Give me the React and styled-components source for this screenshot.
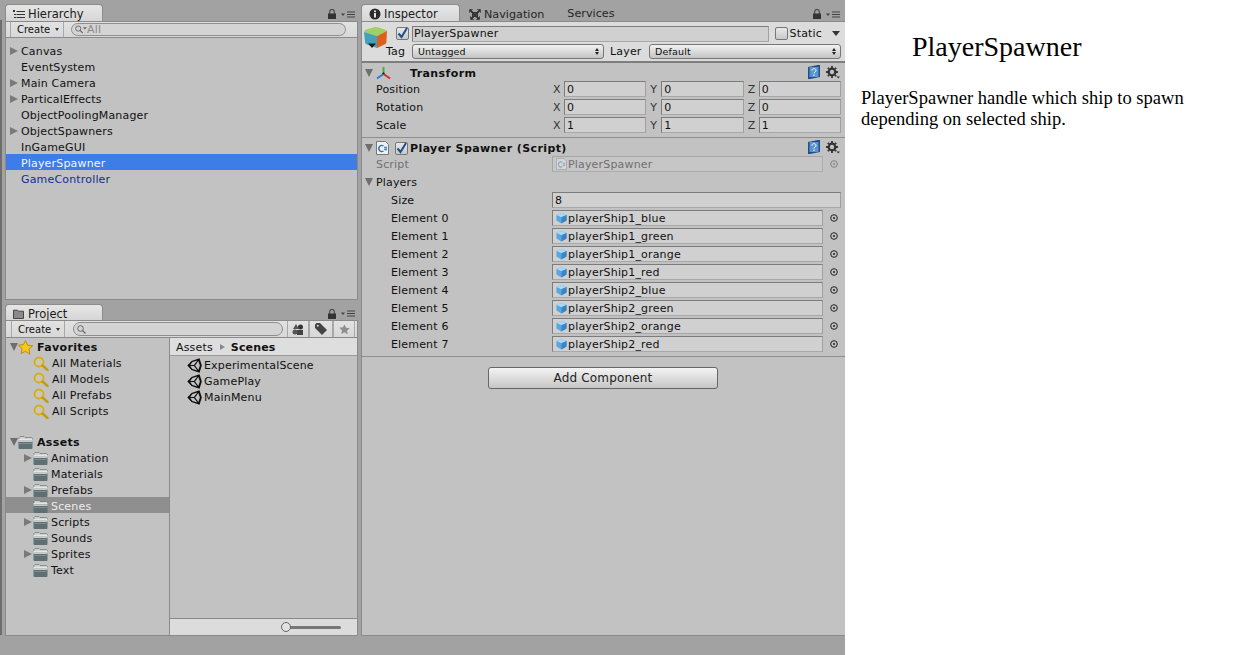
import React from "react";
import styled, { createGlobalStyle } from "styled-components";

const Global = createGlobalStyle`
  html, body { margin: 0; padding: 0; background: #fff; overflow: hidden; }
  #root { width: 1239px; height: 655px; }
  * { box-sizing: border-box; }
`;

const Page = styled.div`
  display: flex;
  width: 1239px;
  height: 655px;
`;
const Editor = styled.div`
  width: 845px;
  height: 655px;
  flex: none;
  display: flex;
  gap: 3px;
  background: #a2a2a2;
  font: 11px "DejaVu Sans", sans-serif;
  letter-spacing: 0.17px;
  color: #101010;
  white-space: nowrap;
`;
const Gutter = styled.div`
  width: 2px;
  flex: none;
  height: 615px;
  margin-top: 20px;
  background: #6e6e6e;
`;
const LeftColumn = styled.div`
  width: 353px;
  flex: none;
  height: 636px;
  display: flex;
  flex-direction: column;
`;
const Panel = styled.section`
  display: flex;
  flex-direction: column;
  height: ${p => p.$h || "auto"};
  flex: ${p => (p.$h ? "none" : "1")};
  min-width: 0;
`;
const TabStrip = styled.div`
  height: ${p => p.$h || 21}px;
  flex: none;
  padding-top: ${p => (p.$top === undefined ? 4 : p.$top)}px;
  display: flex;
  align-items: flex-end;
`;
const Tab = styled.div`
  width: ${p => p.$w}px;
  height: 100%;
  display: flex;
  align-items: center;
  gap: ${p => p.$gap || 3}px;
  padding: 2px 0 0 ${p => p.$pad || 4}px;
  font-size: 11.5px;
  letter-spacing: 0;
  color: #1a1a1a;
  background: linear-gradient(#e6e6e6, #d6d6d6);
  border: 1px solid #8c8c8c;
  border-bottom: none;
  border-radius: 4px 4px 0 0;
`;
const GhostTab = styled.div`
  height: 100%;
  display: flex;
  align-items: center;
  gap: 3px;
  margin-left: ${p => p.$ml}px;
  padding-top: ${p => p.$pt || 3}px;
  font-size: 11.2px;
  letter-spacing: 0;
  color: #262626;
`;
const TabTools = styled.div`
  margin-left: auto;
  height: 100%;
  display: flex;
  align-items: center;
  gap: 5px;
  padding: 3px ${p => p.$pr || 2}px 0 0;
`;
const Toolbar = styled.div`
  height: ${p => p.$h || 17}px;
  flex: none;
  display: flex;
  align-items: stretch;
  background: linear-gradient(#e2e2e2, #d8d8d8);
  border: 1px solid #8a8a8a;
`;
const ToolButton = styled.div`
  margin-left: ${p => p.$ml || 0}px;
  width: ${p => p.$w}px;
  display: flex;
  align-items: center;
  gap: 5px;
  padding-left: ${p => p.$pl || 6}px;
  font-size: 10px;
  letter-spacing: 0;
  border-left: 1px solid #a8a8a8;
  border-right: 1px solid #a8a8a8;
`;
const Caret = styled.span`
  width: 0;
  height: 0;
  border: 2.5px solid transparent;
  border-top: 3px solid #333;
  border-bottom: none;
`;
const SearchField = styled.div`
  margin: 1px 0 1px ${p => p.$ml}px;
  width: ${p => p.$w}px;
  border: 1px solid #8e8e8e;
  border-radius: 8px;
  background: #d4d4d4;
  display: flex;
  align-items: center;
  padding-left: 3px;
  font-size: 11px;
  color: #8a8a8a;
  line-height: 12px;
`;
const ListBody = styled.div`
  flex: 1;
  background: #c2c2c2;
  border: 1px solid #8a8a8a;
  border-top: none;
  padding-top: 4px;
  min-height: 0;
`;
const TreeRow = styled.div`
  height: 16px;
  display: flex;
  align-items: center;
  padding: 2px 0 0 ${p => p.$indent || 0}px;
  background: ${p => (p.$sel ? p.$sel : "transparent")};
  color: ${p => p.$color || "#111"};
  font-weight: ${p => (p.$bold ? 700 : 400)};
  letter-spacing: ${p => (p.$bold ? "0.35px" : "inherit")};
`;
const RowText = styled.span`
  margin-left: ${p => p.$ml}px;
`;
const Arrow = styled.span`
  width: 0;
  height: 0;
  flex: none;
  border-style: solid;
  border-color: transparent;
  border-left-color: #7a7a7a;
  border-width: 4.5px 0 4.5px 8px;
  margin-right: 1px;
`;
const ArrowDown = styled.span`
  width: 0;
  height: 0;
  flex: none;
  border-style: solid;
  border-color: transparent;
  border-top-color: #6e6e6e;
  border-width: 8px 4.5px 0 4.5px;
`;
const ArrowGap = styled.span`
  flex: none;
  width: 9px;
`;
const ProjectBody = styled.div`
  flex: 1;
  display: flex;
  min-height: 0;
  background: #c2c2c2;
  border: 1px solid #8a8a8a;
  border-top: none;
`;
const FolderPane = styled.div`
  width: 164px;
  flex: none;
  border-right: 1px solid #8a8a8a;
`;
const Spacer = styled.div`
  height: ${p => p.$h}px;
`;
const FilePane = styled.div`
  flex: 1;
  min-width: 0;
  display: flex;
  flex-direction: column;
`;
const Breadcrumb = styled.div`
  height: 18px;
  flex: none;
  display: flex;
  align-items: center;
  gap: 5px;
  padding: 1px 0 0 6px;
  background: #dedede;
  border-bottom: 1px solid #9a9a9a;
`;
const BreadArrow = styled.span`
  width: 0;
  height: 0;
  margin: 0 1px 0 2px;
  border-style: solid;
  border-color: transparent;
  border-left-color: #8a8a8a;
  border-width: 3px 0 3px 5px;
`;
const FileList = styled.div`
  flex: 1;
  padding-top: 1px;
`;
const FileRow = styled.div`
  height: 16px;
  display: flex;
  align-items: center;
  gap: 2px;
  padding-left: 17px;
`;
const SliderBar = styled.div`
  height: 17px;
  flex: none;
  display: flex;
  align-items: center;
  justify-content: flex-end;
  padding-right: 16px;
  background: #dcdcdc;
  border-top: 1px solid #8a8a8a;
`;
const SliderTrack = styled.div`
  width: 55px;
  height: 3px;
  border-radius: 2px;
  background: #777;
  position: relative;
`;
const SliderThumb = styled.span`
  position: absolute;
  left: -5px;
  top: -4px;
  width: 10px;
  height: 10px;
  border-radius: 50%;
  background: #e2e2e2;
  border: 1px solid #666;
`;
const Inspector = styled.div`
  flex: 1;
  min-width: 0;
  height: 636px;
  display: flex;
  flex-direction: column;
`;
const InspectorBody = styled.div`
  flex: 1;
  background: #c2c2c2;
  border-left: 1px solid #8a8a8a;
  border-bottom: 1px solid #8a8a8a;
  display: flex;
  flex-direction: column;
`;
const Header = styled.div`
  height: 42px;
  flex: none;
  display: flex;
  background: #dcdcdc;
  border-top: 1px solid #8a8a8a;
  border-bottom: 2px solid #7e7e7e;
  padding-right: 4px;
`;
const CubeSlot = styled.div`
  width: 34px;
  flex: none;
  padding: 4px 0 0 1px;
`;
const HeaderGrid = styled.div`
  flex: 1;
  min-width: 0;
  display: flex;
  flex-direction: column;
  gap: 2px;
  padding-top: 3px;
`;
const HeaderRow = styled.div`
  display: flex;
  align-items: center;
  height: ${p => p.$h}px;
`;
const Check = styled.span`
  width: 13px;
  height: 13px;
  flex: none;
  display: inline-flex;
  align-items: center;
  justify-content: center;
  background: linear-gradient(#e8e8e8, #c9c9c9);
  border: 1px solid #777;
  border-radius: 2px;
  margin: 0 ${p => p.$mr || 0}px 0 ${p => p.$ml || 0}px;
`;
const Field = styled.div`
  height: ${p => p.$h || 16}px;
  flex: 1;
  min-width: 0;
  display: flex;
  align-items: center;
  gap: 1px;
  padding-left: ${p => p.$pl || 2}px;
  background: ${p => (p.$off ? "#c6c6c6" : "#d0d0d0")};
  border: 1px solid ${p => (p.$off ? "#a4a4a4" : "#7c7c7c")};
  border-bottom-color: ${p => (p.$off ? "#acacac" : "#a8a8a8")};
  border-right-color: ${p => (p.$off ? "#acacac" : "#a0a0a0")};
  color: ${p => (p.$off ? "#707070" : "#111")};
`;
const StaticLabel = styled.span`
  margin: 0 10px 0 2px;
`;
const StaticArrow = styled.span`
  margin: 0 1px 0 auto;
  width: 0;
  height: 0;
  border-style: solid;
  border-color: transparent;
  border-top-color: #333;
  border-width: 5px 4.5px 0 4.5px;
`;
const TagLabel = styled.span`
  width: ${p => p.$w}px;
  flex: none;
  margin-left: ${p => p.$ml || 0}px;
`;
const Select = styled.div`
  width: ${p => p.$w}px;
  height: 15px;
  flex: none;
  display: flex;
  align-items: center;
  justify-content: space-between;
  padding: 0 4px 0 5px;
  font-size: 9.5px;
  background: linear-gradient(#f2f2f2, #c4c4c4);
  border: 1px solid #777;
  border-radius: 3px;
`;
const Updown = styled.span`
  display: flex;
  flex-direction: column;
  gap: 1px;
`;
const Tri = styled.span`
  width: 0;
  height: 0;
  border-style: solid;
  border-color: transparent;
  border-width: ${p => (p.$up ? "0 2px 3px 2px" : "3px 2px 0 2px")};
  border-bottom-color: ${p => (p.$up ? "#222" : "transparent")};
  border-top-color: ${p => (p.$up ? "transparent" : "#222")};
`;
const Component = styled.div`
  display: flex;
  flex-direction: column;
  padding-bottom: 3px;
  border-bottom: 1px solid #8e8e8e;
`;
const CompHead = styled.div`
  height: 17px;
  display: flex;
  align-items: center;
  padding: 3px 5px 0 3px;
  font-weight: 700;
  letter-spacing: 0.4px;
`;
const CompIcon = styled.span`
  width: ${p => p.$w}px;
  flex: none;
  display: flex;
  margin-left: 3px;
`;
const CompTools = styled.span`
  margin-left: auto;
  display: flex;
  align-items: center;
  gap: 5px;
  margin-top: -2px;
`;
const PropRow = styled.div`
  height: 18px;
  display: flex;
  align-items: center;
  padding: 0 4px 0 ${p => p.$pl || 14}px;
  color: ${p => p.$color || "inherit"};
`;
const PropLabel = styled.span`
  width: ${p => p.$w}px;
  flex: none;
`;
const Axes = styled.div`
  flex: 1;
  min-width: 0;
  display: grid;
  grid-template-columns: repeat(3, 1fr);
  column-gap: 4px;
`;
const Axis = styled.div`
  display: flex;
  align-items: center;
`;
const AxisLetter = styled.span`
  width: 11px;
  flex: none;
  color: #333;
`;
const Picker = styled.span`
  width: 18px;
  flex: none;
  display: flex;
  justify-content: flex-end;
  padding-right: 3px;
`;
const AddRow = styled.div`
  display: flex;
  justify-content: center;
  padding: 10px 1px 0 0;
`;
const AddButton = styled.div`
  width: 230px;
  height: 22px;
  display: flex;
  align-items: center;
  justify-content: center;
  font-size: 12px;
  color: #222;
  background: linear-gradient(#f4f4f4, #c6c6c6);
  border: 1px solid #666;
  border-radius: 3px;
`;
const Doc = styled.article`
  flex: 1;
  min-width: 0;
  background: #fff;
  color: #000;
  font-family: "Liberation Serif", serif;
  padding-left: 16px;
`;
const DocTitle = styled.h1`
  margin: 31px 0 0 51px;
  font-size: 28px;
  line-height: 32px;
  font-weight: 400;
`;
const DocText = styled.p`
  margin: 24px 0 0;
  width: 340px;
  font-size: 18.55px;
  line-height: 21px;
`;

const Svg = styled.svg`
  flex: none;
  display: block;
`;

const Lock = () => (
  <Svg width="8" height="10" viewBox="0 0 8 10">
    <path d="M1.700 5V2.800a2.300 2.300 0 0 1 4.600 0V5" fill="none" stroke="#444" strokeWidth="1.100" />
    <rect x="0" y="4.500" width="8" height="5.500" fill="#333" />
  </Svg>
);
const PaneMenu = () => (
  <Svg width="14" height="7" viewBox="0 0 14 7">
    <path d="M0 2.500h4L2 5z" fill="#444" />
    <path d="M6 1h8M6 3.500h8M6 6h8" stroke="#444" strokeWidth="1" />
  </Svg>
);
const ListIcon = () => (
  <Svg width="12" height="9" viewBox="0 0 12 9">
    <path d="M3.500 1.500H12M3.500 4.500H12M3.500 7.500H12" stroke="#333" />
    <path d="M0 0h2v2H0zM1 4h2v1H1zM1 7h2v1H1z" fill="#333" />
  </Svg>
);
const TabFolder = () => (
  <Svg width="11" height="10" viewBox="0 0 11 10">
    <path d="M.5 2V1.200h4l1 1h5V9.500H.5z" fill="#8a8a8a" stroke="#444" />
  </Svg>
);
const InfoIcon = () => (
  <Svg width="12" height="12" viewBox="0 0 12 12">
    <circle cx="6" cy="6" r="5.500" fill="#2b2b2b" />
    <rect x="5" y="5" width="2" height="4.500" fill="#e6e6e6" />
    <rect x="5" y="2.500" width="2" height="1.600" fill="#e6e6e6" />
  </Svg>
);
const NavIcon = () => (
  <Svg width="12" height="11" viewBox="0 0 12 11">
    <path d="M.5.5h3l-1 1 7 7 1-1v3h-3l1-1-7-7-1 1zM11.500.5v3l-1-1-7 7 1 1h-3v-3l1 1 7-7-1-1z" fill="#333" stroke="#333" strokeWidth=".6" />
    <rect x="3.500" y="3.500" width="5" height="4" fill="none" stroke="#333" />
  </Svg>
);
const SearchGlyph = ({ caret }) => (
  <Svg width={caret ? 12 : 9} height="9" viewBox={caret ? "0 0 13 9" : "0 0 9 9"}>
    <circle cx="3.500" cy="3.500" r="2.800" fill="none" stroke="#666" />
    <path d="M5.500 5.500l3 3" stroke="#666" strokeWidth="1.200" />
    {caret && <path d="M8.500 2H13l-2.250 2.500z" fill="#666" />}
  </Svg>
);
const ShapesIcon = () => (
  <Svg width="12" height="11" viewBox="0 0 12 11">
    <path d="M4 0l3 5H1z" fill="#555" />
    <circle cx="8.500" cy="3" r="2.500" fill="#333" />
    <rect x="5" y="6" width="6" height="5" fill="#444" />
    <circle cx="3" cy="8" r="2.500" fill="#555" />
  </Svg>
);
const TagIcon = () => (
  <Svg width="12" height="12" viewBox="0 0 12 12">
    <path d="M0 1.500V5l7 7 5-5-7-7H1.500z" fill="#444" />
    <circle cx="2.800" cy="2.800" r="1" fill="#ddd" />
  </Svg>
);
const StarIcon = ({ size = 11, fill = "#8f8f8f", stroke = "none" }) => (
  <Svg width={size} height={size} viewBox="0 0 24 24">
    <path d="M12 1l3.400 7.300 7.900 1-5.800 5.500 1.500 7.900L12 18l-7 3.700 1.500-7.900L.7 8.300l7.900-1z" fill={fill} stroke={stroke} strokeWidth="1.500" />
  </Svg>
);
const Magnifier = () => (
  <Svg width="16" height="15" viewBox="0 0 16 15">
    <circle cx="6" cy="6" r="4.500" fill="#d4cfa8" fillOpacity=".4" stroke="#d8ac10" strokeWidth="1.800" />
    <path d="M9.500 9.500l5 4.500" stroke="#c49a10" strokeWidth="2.400" strokeLinecap="round" />
  </Svg>
);
const FolderIcon = ({ w = 15 }) => (
  <Svg width={w} height="13" viewBox="0 0 15 13">
    <path d="M1 2.500V1.500L2 .5h4l1 1h6.500l1 1V4H1z" fill="#cfd3d3" stroke="#5f6666" strokeWidth=".6" />
    <rect x=".5" y="3" width="14" height="1.500" fill="#e3e6e6" />
    <path d="M.5 5h14v7a1 1 0 0 1-1 1h-12a1 1 0 0 1-1-1z" fill="#5f7075" />
    <rect x=".5" y="5" width="14" height="1" fill="#c5cbcb" />
    <rect x=".5" y="7" width="14" height="1" fill="#7e8d91" />
  </Svg>
);
const UnityIcon = () => (
  <Svg width="15" height="15" viewBox="0 0 15 15">
    <path
      fillRule="evenodd"
      fill="#0c0c0c"
      d="M.3 7.500L4.500 3 12.500.2 14.800 7.500 12.500 14.800 4.500 12zM3.200 6.900H7L10.300 2.500 5.400 4.100zM3.200 8.100H7L10.300 12.500 5.400 10.900zM8.100 7.500L11.300 3 12.900 7.500 11.300 12z"
    />
  </Svg>
);
const GameCube = () => (
  <Svg width="25" height="24" viewBox="0 0 25 24">
    <path d="M1 6Q1 4 3 3.500L12 1q1.500-.3 3 .2l8 2.800q1 .5 1 1.500L14 10z" fill="#9fd068" />
    <path d="M1 6l13 4v12L4 18.500Q2 18 2 16z" fill="#45a0b8" />
    <path d="M14 10l10-5-.6 11q0 1.500-1.400 2.200L14 22z" fill="#dc5f1c" />
    <path d="M5 17.500h8l-4 4.500z" fill="#1c1c1c" />
  </Svg>
);
const CheckMark = () => (
  <svg width="13" height="13" viewBox="0 0 13 13" style={{ margin: "-1px" }}>
    <path d="M2.500 6.500l3 3.500 5.500-9" fill="none" stroke="#1d4f8f" strokeWidth="2" />
  </svg>
);
const AxisIcon = () => (
  <Svg width="15" height="14" viewBox="0 0 15 14">
    <path d="M7.500 8V1" stroke="#3eb43e" strokeWidth="2" />
    <path d="M7.500 8L1 12.500" stroke="#2a7fd0" strokeWidth="2" />
    <path d="M7.500 8l6.500 4.500" stroke="#d0302a" strokeWidth="2" />
    <path d="M7.500 6l-1.500 2h3z" fill="#222" />
  </Svg>
);
const HelpBook = () => (
  <Svg width="14" height="14" viewBox="0 0 14 14">
    <path d="M1 2l10-2h2v12l-10 2H1z" fill="#1f4f86" />
    <rect x="2.500" y="2" width="9" height="10" fill="#5b93d0" />
    <path d="M5 5.500c0-2.500 4-2.500 4 0 0 1.500-2 1.500-2 3M7 9.500v1.500" fill="none" stroke="#fff" />
  </Svg>
);
const Gear = () => (
  <Svg width="14" height="13" viewBox="0 0 14 13">
    <circle cx="6" cy="6" r="3.300" fill="none" stroke="#333" strokeWidth="2.200" />
    <path d="M6 0v2M6 10v2M0 6h2M10 6h2M1.800 1.800l1.400 1.400M8.800 8.800l1.400 1.400M10.200 1.800L8.800 3.200M3.200 8.800l-1.400 1.400" stroke="#333" strokeWidth="1.800" />
    <path d="M10.500 10.500H14l-1.750 2z" fill="#333" />
  </Svg>
);
const ScriptIcon = ({ dim, w = 13, h = 14 }) => (
  <Svg width={w} height={h} viewBox="0 0 13 14" style={{ opacity: dim ? 0.4 : 1 }}>
    <path d="M.5.5h9l3 3v10H.5z" fill="#f0f0f0" stroke="#777" />
    <path d="M7.500 5a3 3 0 1 0 0 5" fill="none" stroke="#2276c9" strokeWidth="1.400" />
    <path d="M8 6.500h3M8 8.500h3M9 5.500v4M10.300 5.500v4" stroke="#2276c9" strokeWidth=".7" />
  </Svg>
);
const PrefabCube = () => (
  <Svg width="11" height="12" viewBox="0 0 13 13">
    <path d="M6.500.5l6 2.500v6.500l-6 3.500-6-3.500V3z" fill="#5aa7e0" />
    <path d="M.5 3l6-2.500 6 2.500-6 2.500z" fill="#a7d8f5" />
    <path d="M6.500 5.500l6-2.500v6.500l-6 3.500z" fill="#3b85c4" />
  </Svg>
);
const PickDot = ({ dim }) => (
  <Svg width="8" height="8" viewBox="0 0 8 8">
    <circle cx="4" cy="4" r="3.300" fill="none" stroke={dim ? "#808080" : "#222"} />
    <circle cx="4" cy="4" r="1" fill={dim ? "#808080" : "#222"} />
  </Svg>
);

const hierarchy = [
  ["Canvas", true], ["EventSystem"], ["Main Camera", true], ["ParticalEffects", true],
  ["ObjectPoolingManager"], ["ObjectSpawners", true], ["InGameGUI"],
];
const favorites = ["All Materials", "All Models", "All Prefabs", "All Scripts"];
const folders = [
  ["Animation", true], ["Materials"], ["Prefabs", true], ["Scenes", false, true],
  ["Scripts", true], ["Sounds"], ["Sprites", true], ["Text"],
];
const scenes = ["ExperimentalScene", "GamePlay", "MainMenu"];
const transform = [
  ["Position", "0"], ["Rotation", "0"], ["Scale", "1"],
];
const ships = [
  "playerShip1_blue", "playerShip1_green", "playerShip1_orange", "playerShip1_red",
  "playerShip2_blue", "playerShip2_green", "playerShip2_orange", "playerShip2_red",
];

const Tools = ({ pr }) => (
  <TabTools $pr={pr}>
    <Lock />
    <PaneMenu />
  </TabTools>
);

export default function App() {
  return (
    <Page>
      <Global />
      <Editor>
        <Gutter />
        <LeftColumn>
          <Panel $h="300px">
            <TabStrip>
              <Tab $w={98} $pad={7}><ListIcon />Hierarchy</Tab>
              <Tools pr={3} />
            </TabStrip>
            <Toolbar>
              <ToolButton $ml={4} $w={54}>Create<Caret /></ToolButton>
              <SearchField $ml={7} $w={275}>
                <SearchGlyph caret />All
              </SearchField>
            </Toolbar>
            <ListBody>
              {hierarchy.map(([name, kids]) => (
                <TreeRow key={name} $indent={4}>
                  {kids ? <Arrow /> : <ArrowGap />}
                  <RowText $ml={2}>{name}</RowText>
                </TreeRow>
              ))}
              <TreeRow $indent={4} $sel="#3e7de7" $color="#f2f6ff">
                <ArrowGap /><RowText $ml={2}>PlayerSpawner</RowText>
              </TreeRow>
              <TreeRow $indent={4} $color="#132f92">
                <ArrowGap /><RowText $ml={2}>GameController</RowText>
              </TreeRow>
            </ListBody>
          </Panel>
          <Spacer $h={3} />
          <Panel>
            <TabStrip $h={17} $top={1}>
              <Tab $w={98} $pad={7} $gap={4}><TabFolder />Project</Tab>
              <Tools pr={3} />
            </TabStrip>
            <Toolbar $h={18}>
              <ToolButton $ml={5} $w={54}>Create<Caret /></ToolButton>
              <SearchField $ml={8} $w={210}><SearchGlyph /></SearchField>
              <ToolButton $ml={4} $w={22} $pl={4}><ShapesIcon /></ToolButton>
              <ToolButton $w={24} $pl={5}><TagIcon /></ToolButton>
              <ToolButton $w={22} $pl={5}><StarIcon /></ToolButton>
            </Toolbar>
            <ProjectBody>
              <FolderPane>
                <TreeRow $indent={4} $bold>
                  <ArrowDown /><StarIcon size={15} fill="#f7c71b" stroke="#b58a10" />
                  <RowText $ml={4}>Favorites</RowText>
                </TreeRow>
                {favorites.map(f => (
                  <TreeRow key={f} $indent={27}>
                    <Magnifier /><RowText $ml={3}>{f}</RowText>
                  </TreeRow>
                ))}
                <Spacer $h={15} />
                <TreeRow $indent={4} $bold>
                  <ArrowDown /><FolderIcon />
                  <RowText $ml={4}>Assets</RowText>
                </TreeRow>
                {folders.map(([name, kids, sel]) => (
                  <TreeRow key={name} $indent={18} $sel={sel ? "#8f8f8f" : ""} $color={sel ? "#ececec" : ""}>
                    {kids ? <Arrow /> : <ArrowGap />}
                    <FolderIcon />
                    <RowText $ml={3}>{name}</RowText>
                  </TreeRow>
                ))}
              </FolderPane>
              <FilePane>
                <Breadcrumb>
                  Assets<BreadArrow /><b>Scenes</b>
                </Breadcrumb>
                <FileList>
                  {scenes.map(s => (
                    <FileRow key={s}><UnityIcon />{s}</FileRow>
                  ))}
                </FileList>
                <SliderBar>
                  <SliderTrack><SliderThumb /></SliderTrack>
                </SliderBar>
              </FilePane>
            </ProjectBody>
          </Panel>
        </LeftColumn>

        <Inspector>
          <TabStrip>
            <Tab $w={99} $pad={7}><InfoIcon />Inspector</Tab>
            <GhostTab $ml={9}><NavIcon />Navigation</GhostTab>
            <GhostTab $ml={23} $pt={1}>Services</GhostTab>
            <Tools pr={5} />
          </TabStrip>
          <InspectorBody>
            <Header>
              <CubeSlot><GameCube /></CubeSlot>
              <HeaderGrid>
                <HeaderRow $h={17}>
                  <Check $mr={3}><CheckMark /></Check>
                  <Field $pl={1}>PlayerSpawner</Field>
                  <Check $ml={6} />
                  <StaticLabel>Static</StaticLabel>
                  <StaticArrow />
                </HeaderRow>
                <HeaderRow $h={15}>
                  <TagLabel $w={26} $ml={-10}>Tag</TagLabel>
                  <Select $w={192}>Untagged<Updown><Tri $up /><Tri /></Updown></Select>
                  <TagLabel $w={39} $ml={6}>Layer</TagLabel>
                  <Select $w={192}>Default<Updown><Tri $up /><Tri /></Updown></Select>
                </HeaderRow>
              </HeaderGrid>
            </Header>
            <Component>
              <CompHead>
                <ArrowDown />
                <CompIcon $w={34}><AxisIcon /></CompIcon>
                Transform
                <CompTools><HelpBook /><Gear /></CompTools>
              </CompHead>
              {transform.map(([label, v]) => (
                <PropRow key={label}>
                  <PropLabel $w={177}>{label}</PropLabel>
                  <Axes>
                    {["X", "Y", "Z"].map(a => (
                      <Axis key={a}><AxisLetter>{a}</AxisLetter><Field>{v}</Field></Axis>
                    ))}
                  </Axes>
                </PropRow>
              ))}
            </Component>
            <Component>
              <CompHead>
                <ArrowDown />
                <CompIcon $w={19}><ScriptIcon /></CompIcon>
                <Check $mr={2}><CheckMark /></Check>
                Player Spawner (Script)
                <CompTools><HelpBook /><Gear /></CompTools>
              </CompHead>
              <PropRow $color="#707070">
                <PropLabel $w={176}>Script</PropLabel>
                <Field $off $pl={3}><ScriptIcon dim w={11} h={12} />PlayerSpawner</Field>
                <Picker><PickDot dim /></Picker>
              </PropRow>
              <PropRow $pl={3}>
                <ArrowDown /><RowText $ml={3}>Players</RowText>
              </PropRow>
              <PropRow $pl={29}>
                <PropLabel $w={161}>Size</PropLabel>
                <Field>8</Field>
              </PropRow>
              {ships.map((s, i) => (
                <PropRow key={s} $pl={29}>
                  <PropLabel $w={161}>Element {i}</PropLabel>
                  <Field $pl={3}><PrefabCube />{s}</Field>
                  <Picker><PickDot /></Picker>
                </PropRow>
              ))}
            </Component>
            <AddRow>
              <AddButton>Add Component</AddButton>
            </AddRow>
          </InspectorBody>
        </Inspector>
      </Editor>
      <Doc>
        <DocTitle>PlayerSpawner</DocTitle>
        <DocText>PlayerSpawner handle which ship to spawn depending on selected ship.</DocText>
      </Doc>
    </Page>
  );
}
